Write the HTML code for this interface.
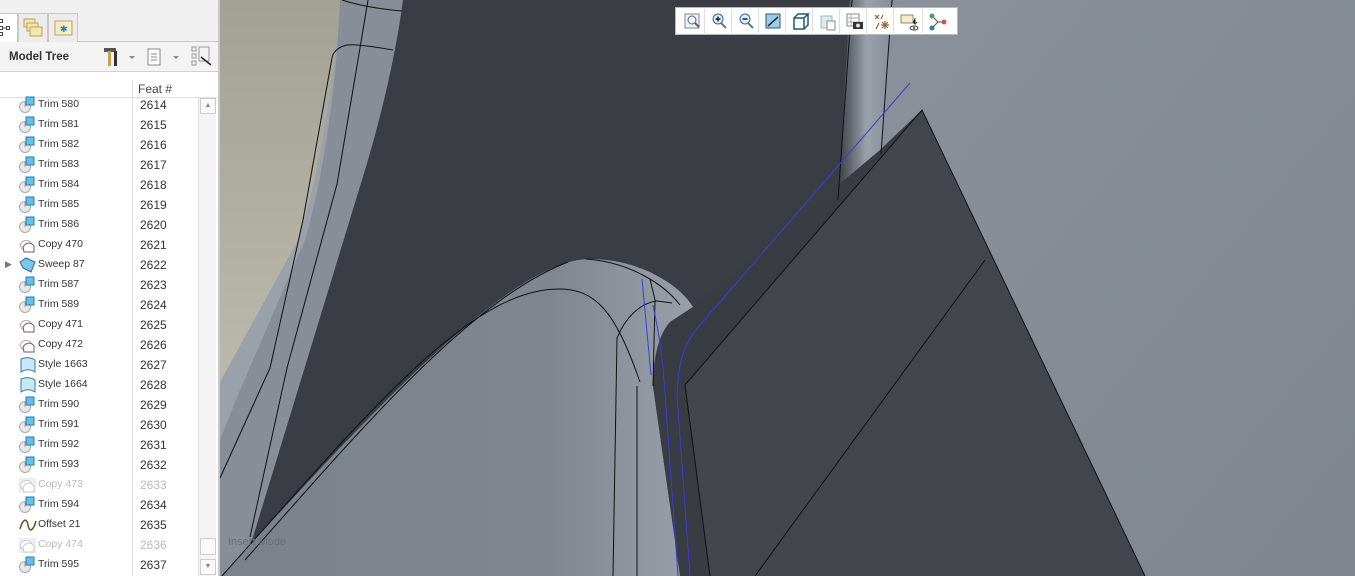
<!DOCTYPE html>
<html><head><meta charset="utf-8"><style>
*{margin:0;padding:0;box-sizing:border-box}
body{width:1355px;height:576px;overflow:hidden;position:relative;font-family:"Liberation Sans",sans-serif;background:#3a3d44}
#panel{position:absolute;left:0;top:0;width:220px;height:576px;background:#fff;border-right:2px solid #c9c9c9}
.tabs{position:absolute;left:0;top:0;width:218px;height:42px;background:#f0f0f0;border-bottom:1px solid #c8c8c8}
.tab{position:absolute;top:13px;height:30px;width:30px;border:1px solid #c8c8c8;border-bottom:none;background:#ececec}
.hdr{position:absolute;left:0;top:42px;width:218px;height:30px;background:#f3f3f3;border-bottom:1px solid #d0d0d0;font-size:11.5px;font-weight:bold;color:#333}
.colh{position:absolute;left:0;top:72px;width:218px;height:26px;background:#fff;border-bottom:1px solid #e0e0e0}
.row{position:absolute;left:0;height:20px;width:198px;font-size:10.5px;color:#333}
.row .n{position:absolute;left:38px;top:4px}
.row .f{position:absolute;left:140px;top:4px;font-size:12px}
.row.g{color:#bbb}
.row svg{position:absolute;left:19px;top:2px}
.sep{position:absolute;left:132px;top:80px;width:1px;height:496px;background:#e0e0e0}
.sb{position:absolute;left:198px;top:98px;width:18px;height:478px;background:#f4f4f4;border-left:1px solid #ddd}
#tb{position:absolute;left:675px;top:7px;width:283px;height:28px;background:#fff;border:1px solid #b8b8b8}
#tb .b{position:absolute;top:1px;width:26px;height:24px;border-right:1px solid #ddd}
#tb svg{position:absolute;left:5px;top:4px}
</style></head><body>
<svg width="1355" height="576" style="position:absolute;left:0;top:0">
<defs>
<linearGradient id="bg" x1="0" y1="0" x2="1" y2="1"><stop offset="0" stop-color="#8a919b"/><stop offset="1" stop-color="#7f868f"/></linearGradient>
<linearGradient id="cyl" x1="0" y1="0" x2="1" y2="0"><stop offset="0" stop-color="#3a3d44"/><stop offset=".5" stop-color="#9aa1ab"/><stop offset="1" stop-color="#858c96"/></linearGradient>
<linearGradient id="bul" x1="0" y1="0" x2="1" y2="0"><stop offset="0" stop-color="#7b828c"/><stop offset=".7" stop-color="#7f8690"/><stop offset="1" stop-color="#98a0aa"/></linearGradient>
<linearGradient id="beige" x1="0" y1="0" x2="0" y2="1"><stop offset="0" stop-color="#a3a294"/><stop offset="1" stop-color="#bab9ab"/></linearGradient>
</defs>
<rect x="220" y="0" width="1135" height="576" fill="#3a3d44"/>
<polygon points="880,0 1355,0 1355,576 1145,576 922,110 880,150" fill="url(#bg)"/>
<polygon points="850,0 895,0 882,150 838,200" fill="url(#cyl)"/>
<path d="M340,0 L403,0 C395,60 380,120 365,170 L253,537 L235,576 L220,576 L220,382 Z" fill="#878e98"/>
<path d="M340,0 C337,80 325,170 305,240 L240,390 L220,440 L220,382 Z" fill="#9aa1ab"/>
<path d="M220,0 L340,0 C335,80 320,170 298,240 L220,382 Z" fill="url(#beige)"/>
<path d="M220,576 L250,545 C400,380 520,259 590,259 C640,259 680,285 693,307 L670,322 C658,335 653,360 653,386 L680,576 Z" fill="url(#bul)"/>
<polygon points="685,385 922,110 1145,576 710,576" fill="#43474d"/>
<polygon points="653,386 670,322 693,307 880,150 922,110 685,385 710,576 680,576" fill="#393c43"/>
<g fill="none" stroke="#111" stroke-width="1">
<path d="M685,385 L922,110 L1145,576"/>
<path d="M685,385 L710,576"/>
<path d="M985,260 L755,576"/>
<path d="M852,0 L838,200 M892,0 L881,154"/>
<path d="M342,0 C360,6 380,9 402,11"/>
<path d="M368,0 L360,48 L337,184 L287,368 L250,537"/>
<path d="M393,50 C370,46 355,44 347,45 C338,47 333,52 332,58 L303,220 L270,368 L220,478"/>
<path d="M222,576 C370,410 470,289 559,289 C595,289 615,310 640,382"/>
<path d="M245,560 C360,430 470,300 568,262"/>
<path d="M586,259 C630,262 665,285 680,305"/>
<path d="M637,386 L637,576"/>
<path d="M613,576 L617,338 C625,318 640,303 657,301 L672,303"/>
<path d="M650,279 L655,300 L653,386"/>
</g>
<g fill="none" stroke="#3b3bdc" stroke-width="1">
<path d="M910,83 L700,325 C685,342 678,360 677,395 L690,576"/>
<path d="M642,279 L651,375"/>
<path d="M653,305 C658,330 662,350 664,380 L678,576"/>
</g>
<text x="228" y="545" font-size="11" fill="#6a6f78" font-family="Liberation Sans">Insert Mode</text>
</svg>

<div id="panel">
<div class="tabs">
<div class="tab" style="left:-2px;width:20px;background:#fff;height:30px"><svg width="14" height="18" style="position:absolute;left:0;top:5px"><g fill="none" stroke="#444"><rect x="0.5" y="0.5" width="3" height="3"/><rect x="0.5" y="7.5" width="3" height="3"/><rect x="0.5" y="13.5" width="3" height="3"/><rect x="7.5" y="7.5" width="3" height="3"/><path d="M4,9H7"/></g></svg></div>
<div class="tab" style="left:18px"><svg width="22" height="22" style="position:absolute;left:4px;top:3px"><g fill="#f5e6b0" stroke="#b8a060"><rect x="1" y="2" width="11" height="8"/><rect x="4" y="6" width="11" height="8"/><rect x="7" y="10" width="12" height="9"/></g></svg></div>
<div class="tab" style="left:48px"><svg width="22" height="22" style="position:absolute;left:4px;top:4px"><rect x="2" y="3" width="17" height="14" fill="#f7ecc0" stroke="#b8a060"/><text x="7" y="14" font-size="9" fill="#2080c0">✱</text></svg></div>
</div>
<div class="hdr"><span style="position:absolute;left:9px;top:9px">Model Tree</span>
<svg width="110" height="24" style="position:absolute;left:102px;top:3px"><rect x="2" y="3" width="12" height="4" fill="#555"/><rect x="6" y="6" width="3" height="15" fill="#c8a050"/><rect x="12" y="6" width="3" height="15" fill="#333"/><path d="M27,11l3,3l3-3z" fill="#888"/><rect x="46" y="4" width="12" height="16" fill="#fff" stroke="#888"/><path d="M49,9h6M49,12h6M49,15h6" stroke="#888"/><path d="M71,11l3,3l3-3z" fill="#888"/><g fill="none" stroke="#999"><rect x="90" y="2" width="4" height="4"/><rect x="90" y="9" width="4" height="4"/><rect x="90" y="16" width="4" height="4"/><rect x="97" y="2" width="10" height="14"/></g><path d="M99,12l10,8" stroke="#222" stroke-width="1.5"/></svg></div>
<div class="colh"><span style="position:absolute;left:138px;top:10px;font-size:12px;color:#444">Feat #</span></div>
<div class="sep"></div>
<div class="sb"><div style="position:absolute;left:1px;top:0;width:16px;height:16px;border:1px solid #ccc;background:#fafafa;font-size:7px;color:#888;text-align:center;line-height:14px">▲</div><div style="position:absolute;left:1px;top:440px;width:16px;height:17px;border:1px solid #ccc;background:#fafafa"></div><div style="position:absolute;left:1px;top:461px;width:16px;height:16px;border:1px solid #ccc;background:#fafafa;font-size:7px;color:#888;text-align:center;line-height:14px">▼</div></div>
<div id="rows"></div>
</div>

<div id="tb">
<div class="b" style="left:3px"><svg width="16" height="16"><rect x="1" y="1" width="14" height="14" fill="#eef4f8" stroke="#789"/><circle cx="8" cy="7" r="4" fill="none" stroke="#567"/><path d="M11,10l4,4" stroke="#567" stroke-width="2"/></svg></div>
<div class="b" style="left:30px"><svg width="16" height="16"><circle cx="7" cy="6" r="5" fill="#dfeef8" stroke="#2a6a9a"/><path d="M4.5,6h5M7,3.5v5" stroke="#123" stroke-width="1.5"/><path d="M10,10l5,5" stroke="#678" stroke-width="2"/></svg></div>
<div class="b" style="left:57px"><svg width="16" height="16"><circle cx="7" cy="6" r="5" fill="#dfeef8" stroke="#2a6a9a"/><path d="M4.5,6h5" stroke="#123" stroke-width="1.5"/><path d="M10,10l5,5" stroke="#678" stroke-width="2"/></svg></div>
<div class="b" style="left:84px"><svg width="16" height="16"><rect x="1" y="1" width="14" height="14" fill="#9ccbe4" stroke="#357"/><path d="M3,13L13,4" stroke="#124" stroke-width="1.5"/></svg></div>
<div class="b" style="left:111px"><svg width="18" height="18"><path d="M2,5h10v11H2zM2,5l4-4h10l-4,4M12,16l4-4V1" fill="none" stroke="#1a5a7a" stroke-width="1.5"/></svg></div>
<div class="b" style="left:138px"><svg width="18" height="18"><rect x="2" y="3" width="11" height="12" fill="#dceaf4" stroke="#9bb"/><rect x="8" y="8" width="8" height="9" fill="#fff" stroke="#888"/></svg></div>
<div class="b" style="left:165px"><svg width="18" height="18"><rect x="1" y="1" width="12" height="12" fill="#fff" stroke="#888"/><path d="M1,5h12M1,9h12M5,1v12" stroke="#aaa"/><rect x="7" y="9" width="10" height="7" fill="#333"/><circle cx="12" cy="12.5" r="2" fill="#ddd"/></svg></div>
<div class="b" style="left:192px"><svg width="18" height="18"><path d="M2,2l4,4M6,2l-4,4M10,2l-2,4M3,16l3-6M12,8v8M8,12h8M9,9l6,6M15,9l-6,6" stroke="#8a6a30" stroke-width="1.2"/></svg></div>
<div class="b" style="left:219px;width:28px"><svg width="20" height="18"><rect x="1" y="2" width="12" height="8" fill="#f7ecc8" stroke="#888"/><path d="M15,5v6l-2-2M15,11l2-2" stroke="#333"/><ellipse cx="14" cy="15" rx="4" ry="2" fill="none" stroke="#333"/><circle cx="14" cy="15" r="1" fill="#333"/></svg></div>
<div class="b" style="left:248px;border-right:none"><svg width="18" height="18"><path d="M3,3L9,9L15,9M9,9L3,15" stroke="#555" fill="none"/><circle cx="3" cy="3" r="2.5" fill="#5a9a5a"/><circle cx="15" cy="9" r="2.5" fill="#d05050"/><circle cx="3" cy="15" r="2.5" fill="#3a7aaa"/></svg></div>
</div>

<script>
var rows=[["t","Trim 580"],["t","Trim 581"],["t","Trim 582"],["t","Trim 583"],["t","Trim 584"],["t","Trim 585"],["t","Trim 586"],["c","Copy 470"],["s","Sweep 87"],["t","Trim 587"],["t","Trim 589"],["c","Copy 471"],["c","Copy 472"],["y","Style 1663"],["y","Style 1664"],["t","Trim 590"],["t","Trim 591"],["t","Trim 592"],["t","Trim 593"],["cg","Copy 473"],["t","Trim 594"],["o","Offset 21"],["cg","Copy 474"],["t","Trim 595"]];
var ic={t:'<svg width="16" height="18"><circle cx="6" cy="11" r="5.5" fill="#e8e8e8" stroke="#aaa"/><path d="M6,11V6" stroke="#aaa"/><rect x="7" y="1" width="8" height="8" fill="#66c0ea" stroke="#2a7aa8"/></svg>',
c:'<svg width="18" height="18"><path d="M1,9C4,3 10,3 13,8V13H3z" fill="#fff" stroke="#aaa"/><path d="M4,11C7,6 12,6 15,10V16H5z" fill="#fff" stroke="#7a4a9a"/></svg>',
cg:'<svg width="18" height="18"><rect x="0" y="2" width="17" height="15" fill="#eee"/><path d="M1,9C4,3 10,3 13,8V13H3z" fill="#fff" stroke="#ccc"/><path d="M4,11C7,6 12,6 15,10V16H5z" fill="#fff" stroke="#ccc"/></svg>',
s:'<svg width="18" height="18"><path d="M1,6L7,2L16,6L12,16L4,12z" fill="#7cc6ea" stroke="#2a6a9a"/></svg>',
y:'<svg width="18" height="18"><path d="M2,3C7,1 11,1 16,4V16C11,13 7,13 2,16z" fill="#c8e8f6" stroke="#3a7aa0"/></svg>',
o:'<svg width="18" height="18"><path d="M1,13C4,2 8,2 9,9C10,16 14,16 17,5" fill="none" stroke="#6a4a20" stroke-width="1.5"/></svg>'};
var h='';rows.forEach(function(r,i){var y=94+i*20;var g=r[0]=='cg';h+='<div class="row'+(g?' g':'')+'" style="top:'+y+'px">'+(r[0]=='s'?'<span style="position:absolute;left:5px;top:5px;font-size:9px;color:#777">▶</span>':'')+ic[r[0]]+'<span class="n">'+r[1]+'</span><span class="f">'+(2614+i)+'</span></div>';});
document.getElementById('rows').innerHTML=h;
</script>
</body></html>
